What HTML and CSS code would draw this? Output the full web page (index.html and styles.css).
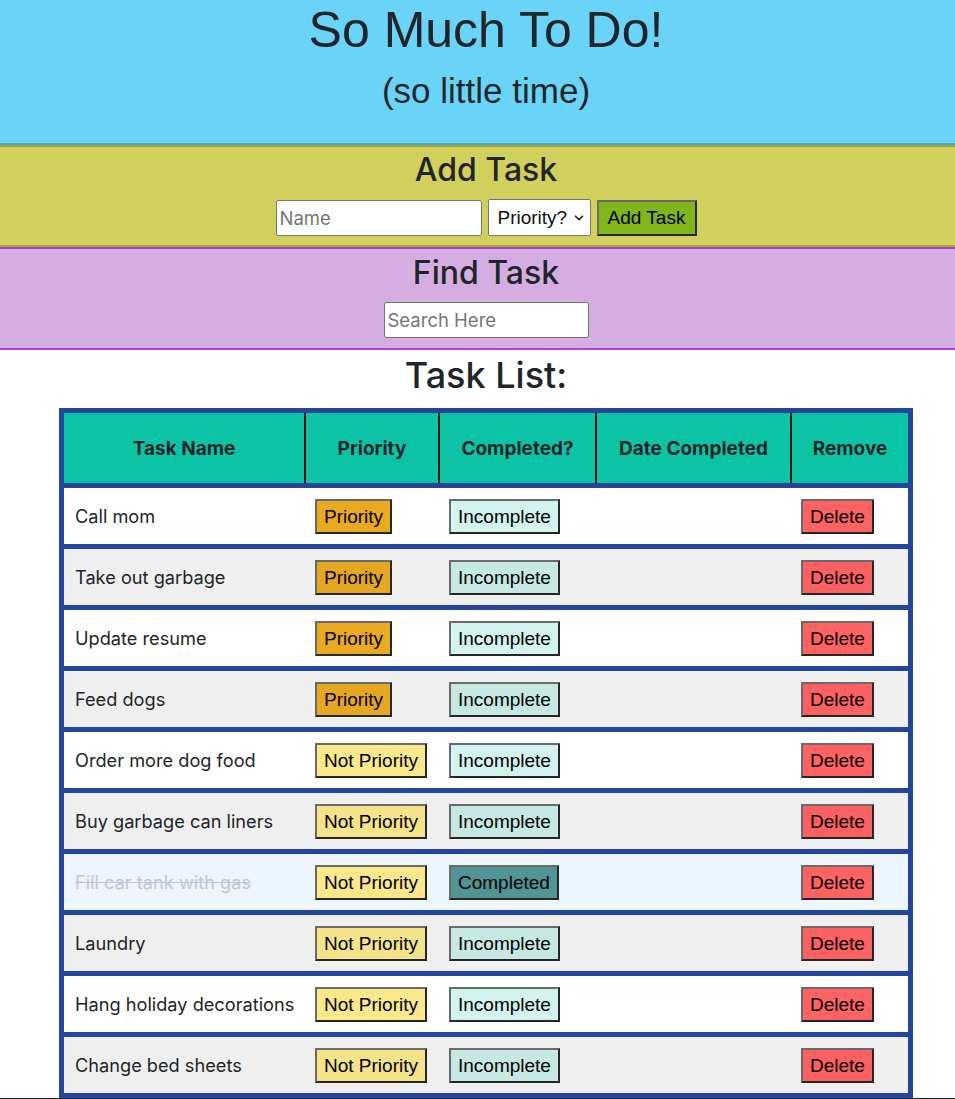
FILE: index.html
```html
<!DOCTYPE html>
<html lang="en">
<head>
<meta charset="utf-8">
<title>So Much To Do!</title>
<link rel="stylesheet" href="styles.css">
</head>
<body>
<header class="hero">
  <h1 class="hero-title">So Much To Do!</h1>
  <p class="hero-sub">(so little time)</p>
</header>

<section class="panel panel-add">
  <h2 class="panel-title">Add Task</h2>
  <form class="form-row">
    <input class="field field-name" type="text" placeholder="Name">
    <span class="select-wrap">
      <select class="field-select">
        <option>Priority?</option>
        <option>Priority</option>
        <option>Not Priority</option>
      </select>
      <svg class="select-chev" width="10" height="8" viewBox="0 0 10 8"><path d="M1.5 2.2 L5 5.6 L8.5 2.2" fill="none" stroke="#222" stroke-width="1.6" stroke-linecap="round" stroke-linejoin="round"/></svg>
    </span>
    <button class="btn btn-add" type="button">Add Task</button>
  </form>
</section>

<section class="panel panel-find">
  <h2 class="panel-title">Find Task</h2>
  <div class="form-row">
    <input class="field field-search" type="text" placeholder="Search Here">
  </div>
</section>

<main class="list">
  <h1 class="list-title">Task List:</h1>
  <table class="tasks">
    <colgroup>
      <col class="c-name"><col class="c-pri"><col class="c-comp"><col class="c-date"><col class="c-rem">
    </colgroup>
    <thead>
      <tr><th>Task Name</th><th>Priority</th><th>Completed?</th><th>Date Completed</th><th>Remove</th></tr>
    </thead>
    <tbody>
      <tr class="row">
        <td class="name">Call mom</td>
        <td><button class="btn btn-pri">Priority</button></td>
        <td><button class="btn btn-inc">Incomplete</button></td>
        <td></td>
        <td><button class="btn btn-del">Delete</button></td>
      </tr>
      <tr class="row alt">
        <td class="name">Take out garbage</td>
        <td><button class="btn btn-pri">Priority</button></td>
        <td><button class="btn btn-inc">Incomplete</button></td>
        <td></td>
        <td><button class="btn btn-del">Delete</button></td>
      </tr>
      <tr class="row">
        <td class="name">Update resume</td>
        <td><button class="btn btn-pri">Priority</button></td>
        <td><button class="btn btn-inc">Incomplete</button></td>
        <td></td>
        <td><button class="btn btn-del">Delete</button></td>
      </tr>
      <tr class="row alt">
        <td class="name">Feed dogs</td>
        <td><button class="btn btn-pri">Priority</button></td>
        <td><button class="btn btn-inc">Incomplete</button></td>
        <td></td>
        <td><button class="btn btn-del">Delete</button></td>
      </tr>
      <tr class="row">
        <td class="name">Order more dog food</td>
        <td><button class="btn btn-np">Not Priority</button></td>
        <td><button class="btn btn-inc">Incomplete</button></td>
        <td></td>
        <td><button class="btn btn-del">Delete</button></td>
      </tr>
      <tr class="row alt">
        <td class="name">Buy garbage can liners</td>
        <td><button class="btn btn-np">Not Priority</button></td>
        <td><button class="btn btn-inc">Incomplete</button></td>
        <td></td>
        <td><button class="btn btn-del">Delete</button></td>
      </tr>
      <tr class="row done">
        <td class="name">Fill car tank with gas</td>
        <td><button class="btn btn-np">Not Priority</button></td>
        <td><button class="btn btn-done">Completed</button></td>
        <td></td>
        <td><button class="btn btn-del">Delete</button></td>
      </tr>
      <tr class="row alt">
        <td class="name">Laundry</td>
        <td><button class="btn btn-np">Not Priority</button></td>
        <td><button class="btn btn-inc">Incomplete</button></td>
        <td></td>
        <td><button class="btn btn-del">Delete</button></td>
      </tr>
      <tr class="row">
        <td class="name">Hang holiday decorations</td>
        <td><button class="btn btn-np">Not Priority</button></td>
        <td><button class="btn btn-inc">Incomplete</button></td>
        <td></td>
        <td><button class="btn btn-del">Delete</button></td>
      </tr>
      <tr class="row alt">
        <td class="name">Change bed sheets</td>
        <td><button class="btn btn-np">Not Priority</button></td>
        <td><button class="btn btn-inc">Incomplete</button></td>
        <td></td>
        <td><button class="btn btn-del">Delete</button></td>
      </tr>
    </tbody>
  </table>
</main>
<footer class="foot"></footer>
</body>
</html>
```

FILE: styles.css
```css
* { box-sizing: border-box; }

html, body {
  margin: 0;
  padding: 0;
  background: #fff;
}

body {
  font-family: Inter, "Noto Sans", sans-serif;
  color: #212529;
  overflow-x: hidden;
}

/* ---------- header ---------- */
.hero {
  background: #69d3f8;
  border-bottom: 2px solid #4a9fe2;
  height: 145px;
  padding-left: 17px;
  text-align: center;
  font-family: "Liberation Sans", Arial, sans-serif;
}

.hero-title {
  margin: 0;
  font-size: 50px;
  line-height: 60px;
  font-weight: 400;
  color: #212529;
}

.hero-sub {
  margin: 10px 0 0;
  font-size: 35px;
  line-height: 42px;
  color: #212529;
}

/* ---------- panels ---------- */
.panel {
  padding-left: 17px;
  text-align: center;
}

.panel-add {
  background: #d1d05d;
  border-top: 2px solid #a6a52a;
  border-bottom: 2px solid #a6a52a;
  padding-top: 4px;
  padding-bottom: 9px;
}

.panel-find {
  background: #d4aee1;
  border-top: 2px solid #b13fd8;
  border-bottom: 2px solid #b13fd8;
  padding-top: 5px;
  padding-bottom: 10px;
}

.panel-title {
  margin: 0 0 10px;
  font-size: 32px;
  line-height: 38px;
  font-weight: 500;
}

.form-row {
  display: flex;
  justify-content: center;
  align-items: center;
  gap: 6px;
  margin: 0;
}

.field {
  height: 36px;
  border: 1px solid #767676;
  border-radius: 2px;
  background: #fff;
  padding: 0 3px;
  font-family: Inter, "Noto Sans", sans-serif;
  font-size: 18.5px;
  color: #212529;
}

.field::placeholder { color: #757575; }

.field-name { width: 206px; }
.field-search { width: 205px; }

.select-wrap {
  position: relative;
  display: inline-block;
}

.field-select {
  appearance: none;
  -webkit-appearance: none;
  width: 103px;
  height: 37px;
  border: 1px solid #767676;
  border-radius: 2px;
  background: #fff;
  padding: 0 0 0 9px;
  font-family: "Liberation Sans", Arial, sans-serif;
  font-size: 19px;
  color: #111;
  display: block;
}

.select-chev {
  position: absolute;
  right: 7px;
  top: 15px;
  pointer-events: none;
}

/* ---------- buttons ---------- */
.btn {
  font-family: "Liberation Sans", Arial, sans-serif;
  font-size: 19px;
  line-height: 23px;
  color: #000;
  padding: 4px 7px;
  border-width: 2px;
  border-style: solid;
  border-color: #6a6a6a #262626 #262626 #6a6a6a;
  border-radius: 0;
  cursor: pointer;
  white-space: nowrap;
  vertical-align: middle;
}

.btn-add { background: #80b51c; height: 36px; width: 100px; padding: 0; }

.btn-pri { background: #e9aa1f; }
.btn-np { background: #fae88b; }
.btn-inc { background: #d3f4ee; }
.btn-done { background: #519494; }
.btn-del { background: #ff6262; }

.alt .btn-pri { background: #e5a71f; }
.alt .btn-np { background: #f5e38a; }
.alt .btn-inc { background: #c6e8e2; }
.alt .btn-del { background: #fc6060; }

/* ---------- list ---------- */
.list {
  padding-left: 17px;
  text-align: center;
}

.list-title {
  margin: 4px 0 11px;
  font-size: 36px;
  line-height: 43px;
  font-weight: 500;
}

.tasks {
  width: 854px;
  margin: 0 auto;
  border: 5px solid #22469d;
  border-spacing: 0;
  border-collapse: separate;
  table-layout: fixed;
  text-align: left;
}

.c-name { width: 242px; }
.c-pri { width: 134px; }
.c-comp { width: 157px; }
.c-date { width: 195px; }
.c-rem { width: 116px; }

.tasks th {
  height: 70px;
  background: #0dc3a5;
  border-right: 2px solid #111;
  font-size: 19px;
  font-weight: 700;
  text-align: center;
  padding: 0;
  color: #212529;
}

.tasks th:last-child { border-right: 0; }

.tasks td {
  height: 61px;
  border-top: 5px solid #22469d;
  background: #fff;
  padding: 0 9px;
  font-size: 18.2px;
  vertical-align: middle;
  white-space: nowrap;
}

.tasks td.name { padding-left: 11px; }

.row.alt td { background: #efefef; }
.row.done td { background: #edf5fe; }

.row.done td.name {
  color: #c3c7cb;
  text-decoration: line-through;
}

.foot {
  height: 40px;
  background: #16262a;
}
```
